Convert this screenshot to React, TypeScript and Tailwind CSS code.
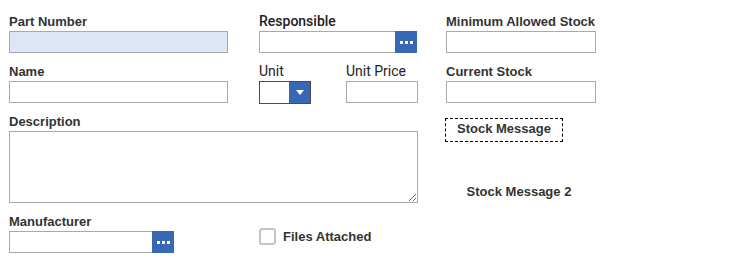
import { useState } from "react";

function Label({ text, roboto = false, medium = false }: { text: string; roboto?: boolean; medium?: boolean }) {
  if (roboto) {
    return (
      <div
        className={`h-[15px] leading-[15px] text-[14px] text-[#222] font-['Roboto',sans-serif] ${
          medium ? "font-medium" : "font-normal"
        }`}
      >
        {text}
      </div>
    );
  }
  return <div className="h-[15px] leading-[15px] text-[13px] font-bold text-[#333]">{text}</div>;
}

function Dots() {
  return (
    <div className="flex items-center gap-[2px]">
      <span className="block w-[3px] h-[3px] bg-white" />
      <span className="block w-[3px] h-[3px] bg-white" />
      <span className="block w-[3px] h-[3px] bg-white" />
    </div>
  );
}

function LookupInput({ width }: { width: string }) {
  return (
    <div className={`flex h-[22px] mt-[2px] ${width}`}>
      <input className="flex-1 min-w-0 h-full border border-[#a9a9a9] border-r-0 bg-white outline-none" />
      <button className="w-[22px] h-full bg-[#3767b5] flex items-center justify-center">
        <Dots />
      </button>
    </div>
  );
}

function TextInput({ width, tinted = false }: { width: string; tinted?: boolean }) {
  return (
    <input
      className={`block h-[22px] mt-[2px] border border-[#a9a9a9] outline-none ${width} ${
        tinted ? "bg-[#dde6f6]" : "bg-white"
      }`}
    />
  );
}

export default function App() {
  const [filesAttached, setFilesAttached] = useState(false);

  return (
    <div className="w-[748px] h-[266px] bg-white flex pl-[9px] pt-[14px] font-['Liberation_Sans',Arial,sans-serif]">
      {/* left area */}
      <div className="w-[437px] flex flex-col">
        <div className="flex h-[50px]">
          <div className="w-[250px]">
            <Label text="Part Number" />
            <TextInput width="w-[219px]" tinted />
          </div>
          <div>
            <Label text="Responsible" roboto medium />
            <LookupInput width="w-[158px]" />
          </div>
        </div>

        <div className="flex h-[50px]">
          <div className="w-[250px]">
            <Label text="Name" />
            <TextInput width="w-[219px]" />
          </div>
          <div className="w-[87px]">
            <Label text="Unit" roboto />
            <div className="flex w-[52px] h-[23px] mt-[2px] border border-[#4a4a4a]">
              <div className="flex-1 bg-white" />
              <div className="w-[21px] bg-[#3767b5] flex items-center justify-center">
                <svg width="8" height="5" viewBox="0 0 8 5">
                  <path d="M0 0 L8 0 L4 5 Z" fill="white" />
                </svg>
              </div>
            </div>
          </div>
          <div>
            <Label text="Unit Price" roboto />
            <TextInput width="w-[72px]" />
          </div>
        </div>

        <div className="h-[100px]">
          <Label text="Description" />
          <textarea className="block w-[409px] h-[72px] mt-[2px] border border-[#a9a9a9] outline-none bg-white" />
        </div>

        <div className="flex">
          <div className="w-[250px]">
            <Label text="Manufacturer" />
            <LookupInput width="w-[165px]" />
          </div>
          <label className="flex items-center gap-[7px] pt-[14px] h-[31px] cursor-pointer">
            <input
              type="checkbox"
              checked={filesAttached}
              onChange={(e) => setFilesAttached(e.target.checked)}
              className="appearance-none w-[17px] h-[17px] rounded-[3px] border-2 border-[#c4c4c4] bg-white"
            />
            <span className="text-[13px] font-bold text-[#333]">Files Attached</span>
          </label>
        </div>
      </div>

      {/* right column */}
      <div className="flex flex-col">
        <div className="h-[50px]">
          <Label text="Minimum Allowed Stock" />
          <TextInput width="w-[150px]" />
        </div>
        <div className="h-[50px]">
          <Label text="Current Stock" />
          <TextInput width="w-[150px]" />
        </div>
        <div className="w-[118px] h-[24px] mt-[4px] -ml-px pb-[3px] border border-dashed border-black flex items-center justify-center text-[13px] font-bold text-[#333]">
          Stock Message
        </div>
        <div className="w-[146px] mt-[42px] text-center text-[13px] font-bold leading-[15px] text-[#333]">
          Stock Message 2
        </div>
      </div>
    </div>
  );
}
